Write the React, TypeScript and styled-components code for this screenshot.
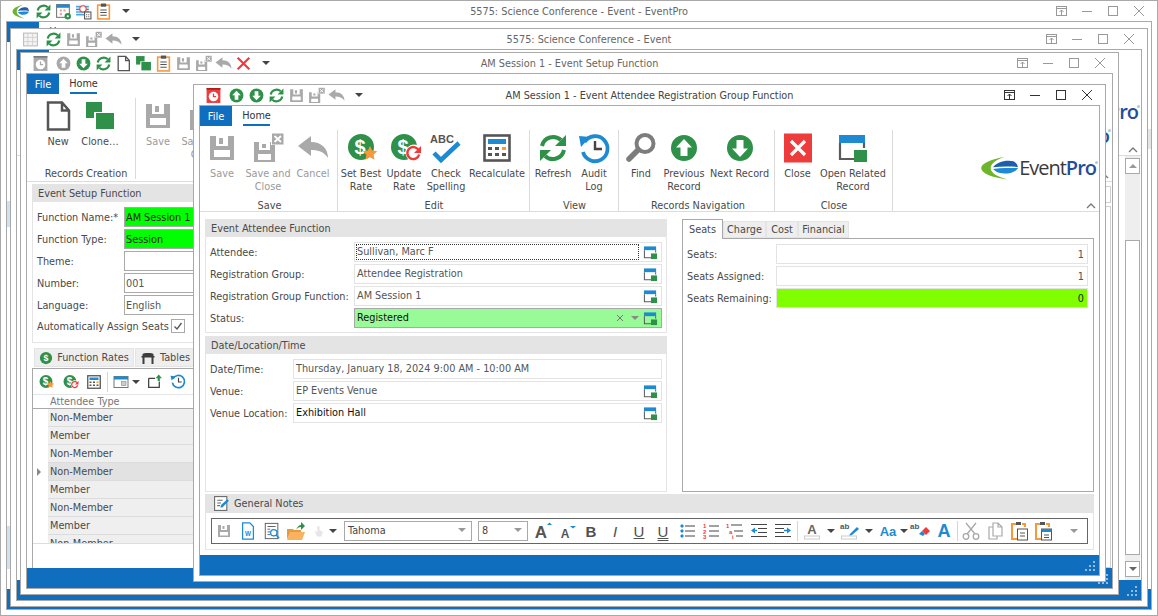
import React from "react";
import styled, { createGlobalStyle } from "styled-components";

const BLUE = "#106ebe";
const GREEN = "#2f9149";
const GRAY = "#a9a9a9";
const ORANGE = "#f7983a";
const RED = "#ee3b3b";
const SKY = "#1e8ad2";
const INK = "#505050";

const GlobalStyle = createGlobalStyle`
  html, body { margin: 0; padding: 0; background: #fff; }
  body { font-family: "DejaVu Sans Condensed", "DejaVu Sans", "Liberation Sans", sans-serif; font-size: 10.8px; color: #4a4a4a; }
  * { box-sizing: border-box; }
  svg { overflow: visible; }
`;

const Desktop = styled.div`
  position: relative;
  width: 1158px;
  height: 616px;
  overflow: hidden;
  background: #fff;
`;

const Win = styled.section<{ $x: number; $y: number; $w: number; $h: number }>`
  position: absolute;
  left: ${(p) => p.$x}px;
  top: ${(p) => p.$y}px;
  width: ${(p) => p.$w}px;
  height: ${(p) => p.$h}px;
  display: flex;
  flex-direction: column;
  padding: 0 5px 5px;
  background: #fff;
  border: 1px solid ${GRAY};
`;

const TitleBar = styled.header`
  height: 20px;
  flex: none;
  display: grid;
  grid-template-columns: 1fr auto 1fr;
  align-items: center;
`;

const Qat = styled.div`
  display: flex;
  align-items: center;
  padding-left: 4px;
`;

const QatCell = styled.span<{ $gap?: number }>`
  width: 20px;
  height: 20px;
  display: flex;
  align-items: center;
  justify-content: center;
  margin-right: ${(p) => p.$gap ?? 0}px;
`;

const Caret = styled.i<{ $color?: string; $gap?: number; $flip?: boolean }>`
  display: inline-block;
  width: 0;
  height: 0;
  margin-left: ${(p) => p.$gap ?? 0}px;
  border-left: 4px solid transparent;
  border-right: 4px solid transparent;
  border-top: ${(p) => (p.$flip ? "0" : `4px solid ${p.$color ?? "#444"}`)};
  border-bottom: ${(p) => (p.$flip ? `4px solid ${p.$color ?? "#444"}` : "0")};
`;

const Title = styled.h1<{ $active?: boolean; $shift?: number }>`
  margin: 0;
  margin-left: ${(p) => p.$shift ?? 0}px;
  font-size: 10.8px;
  font-weight: 400;
  white-space: nowrap;
  color: ${(p) => (p.$active ? "#444" : "#666")};
`;

const Controls = styled.div`
  display: flex;
  justify-content: flex-end;
`;

const ControlCell = styled.span`
  width: 26px;
  height: 20px;
  display: flex;
  align-items: center;
  justify-content: center;
`;

const Client = styled.div`
  flex: 1;
  min-height: 0;
  position: relative;
  display: flex;
  flex-direction: column;
  overflow: hidden;
  border: 1px solid ${GRAY};
`;

const TabRow = styled.nav`
  height: 20px;
  flex: none;
  display: flex;
`;

const FileTab = styled.span`
  width: 32px;
  display: flex;
  align-items: center;
  justify-content: center;
  background: ${BLUE};
  color: #fff;
  font-size: 11px;
`;

const HomeTab = styled.span`
  margin-left: 11px;
  width: 27px;
  display: flex;
  align-items: center;
  justify-content: center;
  color: #333;
  border-bottom: 2px solid ${BLUE};
`;

const RibbonBar = styled.div<{ $h?: number }>`
  position: relative;
  height: ${(p) => p.$h ?? 86}px;
  flex: none;
  display: flex;
  align-items: flex-start;
  border-bottom: 1px solid #dcdcdc;
`;

const Group = styled.div<{ $w: number; $pad?: number }>`
  width: ${(p) => p.$w}px;
  height: 81px;
  margin-top: 4px;
  padding-left: ${(p) => p.$pad ?? 1}px;
  display: flex;
  flex-direction: column;
  flex: none;
  border-right: 1px solid #dadada;
`;

const GroupButtons = styled.div`
  flex: 1;
  display: flex;
`;

const GroupCaption = styled.div`
  height: 13px;
  margin-bottom: -1px;
  line-height: 13px;
  text-align: center;
  color: #4a4a4a;
`;

const RibbonButton = styled.div<{ $w: number; $off?: boolean }>`
  width: ${(p) => p.$w}px;
  flex: none;
  display: flex;
  flex-direction: column;
  align-items: center;
  text-align: center;
  line-height: 13px;
  white-space: nowrap;
  color: ${(p) => (p.$off ? "#9a9a9a" : "#4a4a4a")};
`;

const RibbonIcon = styled.span`
  height: 37px;
  padding-bottom: 1px;
  display: flex;
  align-items: center;
  justify-content: center;
`;

const LogoBox = styled.div`
  position: absolute;
  right: 3px;
  top: 28px;
  height: 28px;
  display: flex;
  align-items: center;
  gap: 1px;
`;

const LogoWord = styled.span`
  position: relative;
  font-family: "Open Sans", "Liberation Sans", sans-serif;
  font-size: 20px;
  line-height: 28px;
  letter-spacing: -1px;
  color: #3a3a3a;
  &::after {
    content: "";
    position: absolute;
    right: -2px;
    top: 7px;
    width: 3px;
    height: 3px;
    border-radius: 50%;
    background: #a9c9e4;
  }
`;

const LogoPro = styled.b`
  color: #1d4f9c;
  font-weight: 600;
`;

const Collapse = styled.span`
  position: absolute;
  right: 2px;
  bottom: 0;
  display: flex;
`;

const Body = styled.div`
  flex: 1;
  min-height: 0;
  display: flex;
  flex-direction: column;
  gap: 2px;
  padding: 7px 5px 5px;
  overflow: hidden;
`;

const MainRow = styled.div`
  flex: 1;
  min-height: 0;
  display: flex;
  gap: 15px;
`;

const Column = styled.div<{ $w: number; $gap?: number }>`
  width: ${(p) => p.$w}px;
  flex: none;
  display: flex;
  flex-direction: column;
  gap: ${(p) => p.$gap ?? 3}px;
`;

const Panel = styled.div<{ $grow?: boolean }>`
  flex: ${(p) => (p.$grow ? 1 : "none")};
  border: 1px solid #e4e4e4;
  border-top: 0;
`;

const PanelHead = styled.div`
  height: 18px;
  display: flex;
  align-items: center;
  gap: 5px;
  padding-left: 5px;
  background: #e4e4e4;
  color: #4a4a4a;
`;

const Rows = styled.div`
  display: flex;
  flex-direction: column;
  gap: 2px;
  padding: 5px 4px 4px;
`;

const Row = styled.div<{ $label: number }>`
  display: grid;
  grid-template-columns: ${(p) => p.$label}px 1fr;
  align-items: center;
`;

const Label = styled.span`
  white-space: nowrap;
  color: #4a4a4a;
`;

const Field = styled.div<{ $bg?: string; $line?: string; $ink?: string; $right?: boolean }>`
  height: 20px;
  display: flex;
  align-items: center;
  gap: 4px;
  padding: 0 3px 0 1px;
  justify-content: ${(p) => (p.$right ? "flex-end" : "flex-start")};
  background: ${(p) => p.$bg ?? "#fff"};
  border: 1px solid ${(p) => p.$line ?? "#e3e3e3"};
  color: ${(p) => p.$ink ?? "#555"};
  white-space: nowrap;
  overflow: hidden;
`;

const FieldText = styled.span<{ $focus?: boolean }>`
  flex: 1;
  height: 16px;
  line-height: 14px;
  border: 1px ${(p) => (p.$focus ? "dotted #333" : "solid transparent")};
`;

const TabStrip = styled.div`
  height: 19px;
  flex: none;
  display: flex;
  align-items: flex-end;
  position: relative;
  z-index: 1;
`;

const PageTab = styled.span<{ $w: number; $active?: boolean; $h?: number }>`
  width: ${(p) => p.$w}px;
  height: ${(p) => p.$h ?? (p.$active ? 20 : 17)}px;
  margin-bottom: ${(p) => (p.$active ? -1 : 0)}px;
  display: flex;
  align-items: center;
  justify-content: center;
  gap: 4px;
  background: ${(p) => (p.$active ? "#fff" : "#eee")};
  border: 1px solid ${(p) => (p.$active ? GRAY : "#e4e4e4")};
  border-bottom: ${(p) => (p.$active ? "0" : "1px solid #e4e4e4")};
`;

const TabPane = styled.div`
  flex: 1;
  padding: 5px 5px 0 4px;
  display: flex;
  flex-direction: column;
  gap: 2px;
  border: 1px solid ${GRAY};
`;

const NotesPanel = styled.div`
  flex: none;
  border: 1px solid #e4e4e4;
  border-top: 0;
`;

const NotesHead = styled(PanelHead)`
  height: 19px;
  gap: 4px;
  padding-left: 7px;
`;

const Toolbar = styled.div`
  height: 26px;
  margin: 5px;
  display: flex;
  align-items: center;
  border: 1px solid #666;
`;

const Tool = styled.span<{ $w?: number; $ink?: string; $size?: number; $bold?: boolean; $italic?: boolean; $under?: string }>`
  width: ${(p) => p.$w ?? 24}px;
  height: 22px;
  flex: none;
  display: flex;
  align-items: center;
  justify-content: center;
  color: ${(p) => p.$ink ?? INK};
  font-family: "Liberation Sans", sans-serif;
  font-size: ${(p) => p.$size ?? 15}px;
  font-weight: ${(p) => (p.$bold ? 700 : 400)};
  font-style: ${(p) => (p.$italic ? "italic" : "normal")};
  text-decoration: ${(p) => (p.$under ? `underline ${p.$under}` : "none")};
`;

const ToolCaret = styled.span<{ $w?: number }>`
  width: ${(p) => p.$w ?? 14}px;
  flex: none;
  display: flex;
  justify-content: center;
`;

const Combo = styled.span<{ $w: number; $gap: number }>`
  width: ${(p) => p.$w}px;
  height: 20px;
  margin-left: ${(p) => p.$gap}px;
  flex: none;
  display: flex;
  align-items: center;
  justify-content: space-between;
  padding: 0 5px 2px 3px;
  color: #444;
  border: 1px solid ${GRAY};
`;

const ToolSep = styled.span<{ $left?: number; $right?: number }>`
  width: 1px;
  height: 20px;
  flex: none;
  margin: 0 ${(p) => p.$right ?? 2}px 0 ${(p) => p.$left ?? 2}px;
  background: #d4d4d4;
`;

const ToolEnd = styled.span`
  margin-left: auto;
  padding-right: 2px;
  width: 24px;
  display: flex;
  justify-content: center;
`;

const StatusBar = styled.footer`
  position: relative;
  height: 20px;
  flex: none;
  background: ${BLUE};
`;

const Grip = styled.svg`
  position: absolute;
  right: 2px;
  bottom: 2px;
`;

/* back windows */
const SetupBody = styled.div`
  flex: 1;
  min-height: 0;
  display: flex;
  gap: 12px;
  padding: 2px 0 0 5px;
  overflow: hidden;
`;

const SetupLeft = styled.div`
  width: 560px;
  flex: none;
  display: flex;
  flex-direction: column;
`;

const SetupRight = styled.div`
  flex: 1;
  display: flex;
  flex-direction: column;
  gap: 3px;
  padding: 2px 1px 0 0;
`;

const GhostBox = styled.div<{ $h?: number }>`
  flex: ${(p) => (p.$h ? "none" : 1)};
  height: ${(p) => (p.$h ? `${p.$h}px` : "auto")};
  border: 1px solid #cfcfcf;
`;

const CheckRow = styled(Row)`
  height: 18px;
`;

const Spacer = styled.span`
  height: 1px;
`;

const CheckBox = styled.span`
  width: 14px;
  height: 14px;
  display: flex;
  align-items: center;
  justify-content: center;
  border: 1px solid ${GRAY};
`;

const GridTabs = styled.div`
  height: 25px;
  flex: none;
  padding: 5px 0 0 2px;
  display: flex;
  gap: 1px;
`;

const DataGrid = styled.div`
  flex: 1;
  min-height: 0;
  display: flex;
  flex-direction: column;
  border-left: 1px solid ${GRAY};
  border-top: 1px solid ${GRAY};
`;

const GridTools = styled.div`
  height: 25px;
  flex: none;
  display: flex;
  align-items: center;
  padding-left: 1px;
`;

const GridHead = styled.div`
  height: 15px;
  flex: none;
  padding-left: 17px;
  line-height: 14px;
  color: #777;
  border-top: 1px solid #e4e4e4;
  border-bottom: 1px solid ${GRAY};
`;

const GridRows = styled.div`
  height: 135px;
  flex: none;
  overflow: hidden;
  border-bottom: 1px solid #ddd;
`;

const GridRow = styled.div<{ $current?: boolean }>`
  position: relative;
  height: 18px;
  margin-left: 15px;
  padding-left: 2px;
  line-height: 18px;
  background: ${(p) => (p.$current ? "#e2e2e2" : "#efefef")};
  border-bottom: 1px solid #dcdcdc;
`;

const RowPointer = styled.i`
  position: absolute;
  left: -11px;
  top: 5px;
  border-top: 4px solid transparent;
  border-bottom: 4px solid transparent;
  border-left: 4px solid #888;
`;

const ScrollBody = styled.div`
  flex: 1;
  min-height: 0;
  display: flex;
  justify-content: flex-end;
`;

const ScrollTrack = styled.div`
  width: 15px;
  margin-right: 1px;
  display: flex;
  flex-direction: column;
  padding: 2px 0 1px;
  background: #eee;
`;

const ScrollStep = styled.span`
  height: 16px;
  flex: none;
  display: flex;
  align-items: center;
  justify-content: center;
  background: #fff;
  border: 1px solid ${GRAY};
`;

const ScrollThumb = styled.span`
  height: 315px;
  margin: 66px 0 6px;
  flex: none;
  background: #fff;
  border: 1px solid ${GRAY};
`;

const EdgeMark = styled.span<{ $side: "left" | "right"; $top: number; $h: number; $tone: string }>`
  position: absolute;
  ${(p) => p.$side}: 0;
  top: ${(p) => p.$top}px;
  width: 3px;
  height: ${(p) => p.$h}px;
  background: ${(p) => p.$tone};
`;

const up = (
  <>
    <circle cx="16" cy="16" r="13" fill={GREEN} />
    <path d="M16 7l8 8.500h-4.500V24h-7v-8.500H8z" fill="#fff" />
  </>
);

const down = (
  <>
    <circle cx="16" cy="16" r="13" fill={GREEN} />
    <path d="M16 25l8-8.500h-4.500V8h-7v8.500H8z" fill="#fff" />
  </>
);

const dollar = (
  <>
    <circle cx="16" cy="15" r="13" fill={GREEN} />
    <text x="15" y="22" textAnchor="middle" fontFamily="Liberation Sans" fontWeight="700" fontSize="20" fill="#fff">$</text>
  </>
);

const floppy = (c: string) => (
  <path fillRule="evenodd" fill={c} d="M4 4h24v24H4zM10 4v10h12V4zM8 18v7h16v-7zM13 6h4v6h-4z" />
);

const big: Record<string, React.ReactNode> = {
  save: floppy(GRAY),
  saveClose: (
    <>
      <path fillRule="evenodd" fill={GRAY} d="M2 10h21v20H2zM7 10v8h11v-8zM6 22v6h13v-6zM10 12h4v4h-4z" />
      <rect x="19" y="1" width="12.500" height="12" fill="#fff" />
      <rect x="20" y="1.500" width="11.500" height="11" fill={GRAY} />
      <path d="M22.500 4l6.500 6M29 4l-6.500 6" stroke="#fff" strokeWidth="1.800" />
    </>
  ),
  undo: <path fill={GRAY} d="M1 14L14 4v6c10 0 17 6 17 16-4-6-9-8-17-8v6z" />,
  up,
  down,
  upGray: (
    <>
      <circle cx="16" cy="16" r="13" fill={GRAY} />
      <path d="M16 7l8 8.500h-4.500V24h-7v-8.500H8z" fill="#fff" />
    </>
  ),
  refresh: (
    <>
      <path d="M5 14A11.500 11.500 0 0 1 24 8" fill="none" stroke={GREEN} strokeWidth="4" />
      <path d="M29 3v11H18z" fill={GREEN} />
      <path d="M27 18A11.500 11.500 0 0 1 8 24" fill="none" stroke={GREEN} strokeWidth="4" />
      <path d="M3 29V18h11z" fill={GREEN} />
    </>
  ),
  bestRate: (
    <>
      {dollar}
      <path d="M25 14l2.200 4.500 5 .7-3.600 3.500.9 5-4.500-2.400-4.500 2.400.9-5-3.600-3.500 5-.7z" fill={ORANGE} />
    </>
  ),
  updateRate: (
    <>
      {dollar}
      <circle cx="26" cy="21" r="8.500" fill="#fff" />
      <path d="M31 19a6 6 0 1 0 .2 3.500" fill="none" stroke={RED} strokeWidth="2.400" />
      <path d="M33 14v7h-7z" fill={RED} />
    </>
  ),
  spell: (
    <>
      <text x="0" y="11" fontFamily="Liberation Sans" fontWeight="700" fontSize="11" fill="#555">ABC</text>
      <path d="M4 21l7 7L29 11" fill="none" stroke={SKY} strokeWidth="4.500" />
    </>
  ),
  calc: (
    <>
      <rect x="3.500" y="3.500" width="25" height="25" fill="#fff" stroke="#555" strokeWidth="2.600" />
      <rect x="7" y="7" width="18" height="5" fill={SKY} />
      <path d="M7 15h4v3H7zM14 15h4v3h-4zM7 21h4v3H7zM14 21h4v3h-4zM21 21h4v3h-4z" fill="#555" />
      <rect x="21" y="15" width="4" height="3" fill={ORANGE} />
    </>
  ),
  audit: (
    <>
      <path d="M6.500 10A12.500 12.500 0 1 1 5 20" fill="none" stroke={SKY} strokeWidth="3.800" />
      <path d="M1 4l11 1-9 10z" fill={SKY} />
      <path d="M17 9v8h7" fill="none" stroke="#444" strokeWidth="2.400" />
    </>
  ),
  find: (
    <>
      <circle cx="20" cy="11.500" r="8.500" fill="#fff" stroke="#7d7d7d" strokeWidth="4" />
      <path d="M13 18L4 27" stroke="#7d7d7d" strokeWidth="5.500" strokeLinecap="round" />
    </>
  ),
  close: (
    <>
      <rect x="2" y="1.500" width="28" height="29" fill={RED} />
      <path d="M9 9l14 14M23 9L9 23" stroke="#fff" strokeWidth="3.200" />
    </>
  ),
  related: (
    <>
      <rect x="2" y="3" width="26" height="8" fill={SKY} />
      <path d="M3 11v16h16M27 11v5" fill="none" stroke="#5b5b5b" strokeWidth="2.200" />
      <rect x="17" y="18" width="13" height="12" fill={GREEN} />
    </>
  ),
  newDoc: <path d="M6 2.500h14l7 8v19H6z M20 2.500v8h7" fill="none" stroke="#555" strokeWidth="2.500" />,
  clone: (
    <>
      <rect x="2" y="2" width="16" height="16" fill={GREEN} />
      <rect x="10" y="12" width="18" height="16" fill="#fff" />
      <rect x="12" y="13" width="18" height="16" fill={GREEN} />
    </>
  ),
  clockRed: (
    <>
      <rect x="3" y="2" width="26" height="28" fill={RED} />
      <rect x="3" y="2" width="26" height="3" fill="#a81c1c" />
      <circle cx="16" cy="18" r="9" fill="#fff" />
      <path d="M16 12v6h5" fill="none" stroke={RED} strokeWidth="2.400" />
    </>
  ),
  clockGray: (
    <>
      <rect x="3" y="2" width="26" height="28" fill={GRAY} />
      <rect x="3" y="2" width="26" height="3" fill="#777" />
      <circle cx="16" cy="18" r="9" fill="#fff" />
      <path d="M16 12v6h5" fill="none" stroke={GRAY} strokeWidth="2.400" />
    </>
  ),
  clipboard: (
    <>
      <rect x="5" y="4" width="22" height="26" fill="#fff" stroke={ORANGE} strokeWidth="3" />
      <rect x="11" y="1" width="10" height="6" fill="#555" />
      <path d="M10 13h12M10 18h12M10 23h12" stroke="#555" strokeWidth="2" />
    </>
  ),
  xRed: <path d="M5 5l22 22M27 5L5 27" stroke={RED} strokeWidth="4" />,
  grid: (
    <>
      <rect x="3" y="4" width="26" height="24" fill="#f4f4f4" stroke="#bbb" strokeWidth="2" />
      <path d="M11 4v24M20 4v24M3 12h26M3 20h26" stroke="#ccc" strokeWidth="1.500" />
    </>
  ),
  calGear: (
    <>
      <rect x="3" y="3" width="24" height="24" fill="#fff" stroke="#777" strokeWidth="2" />
      <rect x="3" y="3" width="24" height="6" fill={SKY} />
      <path d="M9 12h4v4H9zM16 12h4v4h-4zM9 19h4v4H9z" fill="#e8a0a0" />
      <circle cx="24" cy="25" r="6" fill={GREEN} />
      <circle cx="24" cy="25" r="2" fill="#fff" />
    </>
  ),
  schedule: (
    <>
      <rect x="2" y="3" width="24" height="22" fill="#dcebf7" />
      <path d="M2 7h24M2 12h24M2 17h24M2 22h24" stroke={SKY} strokeWidth="2" />
      <circle cx="15" cy="11" r="6" fill="#fff" stroke={RED} strokeWidth="2" />
      <rect x="18" y="17" width="12" height="13" fill="#fff" stroke="#555" strokeWidth="2" />
      <path d="M21 22h2M25 22h2M21 26h2M25 26h2" stroke="#555" strokeWidth="2" />
    </>
  ),
  swoosh: (
    <>
      <path d="M21 3C9 6 1 11 1 16c0 6 9 11 22 13-8-3-14-7-14-13 0-5 5-10 12-13z" fill="#6fb52c" />
      <path d="M11 15c3-5 9-8 15-7 3 0 5 2 6 7-6-1-14-1-21 0z" fill="#1d5fae" />
      <path d="M11 17c7-1 14-1 21-1-2 5-8 7-13 6-3 0-6-2-8-5z" fill="#1e8ad2" />
    </>
  ),
  window: (
    <>
      <rect x="2" y="5" width="28" height="22" fill="#fff" stroke="#777" strokeWidth="2" />
      <rect x="2" y="5" width="28" height="6" fill={SKY} />
      <rect x="17" y="15" width="9" height="8" fill="#ccc" stroke="#777" />
    </>
  ),
  folderUp: (
    <>
      <path d="M5 10h12M5 10v17h20V16" fill="none" stroke="#444" strokeWidth="2.400" />
      <path d="M24 3l6 7h-4v5h-4v-5h-4z" fill={GREEN} />
    </>
  ),
  history: (
    <>
      <path d="M5.500 11A11.500 11.500 0 1 1 4.500 18" fill="none" stroke={SKY} strokeWidth="3.200" />
      <path d="M1 5l9 1-7 8z" fill={SKY} />
      <path d="M16 9v8h6" fill="none" stroke="#444" strokeWidth="2.200" />
    </>
  ),
  tables: (
    <>
      <path d="M5 8c0-3 22-3 22 0v4H5z" fill="#3d3d3d" />
      <path d="M3 12h26v3H3zM5 15h4v13H5zM23 15h4v13h-4z" fill="#3d3d3d" />
    </>
  ),
  coin: (
    <>
      <circle cx="16" cy="16" r="14" fill={GREEN} />
      <text x="16" y="23" textAnchor="middle" fontFamily="Liberation Sans" fontWeight="700" fontSize="20" fill="#fff">$</text>
    </>
  ),
  notes: (
    <>
      <rect x="3" y="3" width="23" height="26" fill="#fff" stroke="#666" strokeWidth="2" />
      <path d="M8 10h10M8 15h7M8 20h5" stroke="#666" strokeWidth="2" />
      <path d="M14 24l1-5 12-11 3 3-12 12z" fill={SKY} />
    </>
  ),
};

const small: Record<string, React.ReactNode> = {
  word: (
    <>
      <path d="M4 1h8l4 4v14H4z" fill="#fff" stroke={SKY} strokeWidth="1.400" />
      <text x="10" y="15" textAnchor="middle" fontFamily="Liberation Sans" fontWeight="700" fontSize="7" fill={SKY}>W</text>
    </>
  ),
  preview: (
    <>
      <rect x="2.500" y="1.500" width="14" height="17" fill="#fff" stroke="#555" />
      <path d="M5 5h9M5 8h3M5 11h3M5 14h3" stroke="#555" />
      <circle cx="12" cy="12" r="3.500" fill="#fff" stroke={SKY} strokeWidth="1.400" />
      <path d="M14.500 14.500L18 18" stroke={SKY} strokeWidth="1.600" />
    </>
  ),
  open: (
    <>
      <path d="M1 8h6l1 1h7v2H5l-4 7z" fill="#e99a3f" />
      <path d="M4 11h15l-3 8H1z" fill="#f9b25e" />
      <path d="M10 9c1-3 3-5 5-5V1l4 4-4 4V6c-2 0-4 1-5 3z" fill={GREEN} />
    </>
  ),
  hand: <path d="M9 4v8l-2-2-1 1 3 6h5l2-5-1-2-3-.5V4z" fill="#e6e6e6" />,
  grow: (
    <>
      <text x="8" y="17" textAnchor="middle" fontFamily="Liberation Sans" fontWeight="700" fontSize="17" fill="#555">A</text>
      <path d="M14 4l2.500-2.500L19 4z" fill={SKY} />
    </>
  ),
  shrink: (
    <>
      <text x="8" y="17" textAnchor="middle" fontFamily="Liberation Sans" fontWeight="700" fontSize="12" fill="#555">A</text>
      <path d="M13 5h6l-3 2.500z" fill={SKY} />
    </>
  ),
  bullets: (
    <>
      <path d="M4 4h2v2H4zM4 9h2v2H4zM4 14h2v2H4z" fill={SKY} stroke={SKY} />
      <path d="M8 5h10M8 10h10M8 15h10" stroke="#444" />
    </>
  ),
  numbers: (
    <>
      <text x="2" y="7" fontFamily="Liberation Sans" fontWeight="700" fontSize="6" fill={RED}>1</text>
      <text x="2" y="12.500" fontFamily="Liberation Sans" fontWeight="700" fontSize="6" fill={RED}>2</text>
      <text x="2" y="18" fontFamily="Liberation Sans" fontWeight="700" fontSize="6" fill={RED}>3</text>
      <path d="M8 5h10M8 10h10M8 15h10" stroke="#444" />
    </>
  ),
  multi: (
    <>
      <text x="1" y="7" fontFamily="Liberation Sans" fontWeight="700" fontSize="6" fill={RED}>1</text>
      <text x="4" y="12.500" fontFamily="Liberation Sans" fontWeight="700" fontSize="6" fill={RED}>a</text>
      <text x="7" y="18" fontFamily="Liberation Sans" fontWeight="700" fontSize="6" fill={RED}>i</text>
      <path d="M6 4h11M9 10h9M11 15h7" stroke="#444" />
    </>
  ),
  outdent: (
    <>
      <path d="M2 3.500h16M9 7.500h9M9 11.500h9M2 15.500h16" stroke="#444" />
      <path d="M2 9.500l4-3v6z" fill={SKY} />
      <path d="M5 9.500h3" stroke={SKY} strokeWidth="1.500" />
    </>
  ),
  indent: (
    <>
      <path d="M2 3.500h16M2 7.500h9M2 11.500h9M2 15.500h16" stroke="#444" />
      <path d="M18 9.500l-4-3v6z" fill={SKY} />
      <path d="M11 9.500h4" stroke={SKY} strokeWidth="1.500" />
    </>
  ),
  fontColor: (
    <>
      <text x="10" y="13" textAnchor="middle" fontFamily="Liberation Sans" fontWeight="700" fontSize="13" fill="#666">A</text>
      <rect x="2.500" y="15" width="15" height="3" fill="#fff" stroke="#ccc" />
    </>
  ),
  highlight: (
    <>
      <text x="0" y="8" fontFamily="Liberation Sans" fontWeight="700" fontSize="8" fill="#555">ab</text>
      <path d="M10 13l7-7 2 2-7 6-3 1z" fill={SKY} />
      <rect x="1.500" y="15" width="15" height="3" fill="#fff" stroke="#ccc" />
    </>
  ),
  clear: (
    <>
      <text x="0" y="8" fontFamily="Liberation Sans" fontWeight="700" fontSize="8" fill="#555">ab</text>
      <path d="M12 10l4-4 4 4-4 4z" fill={RED} />
      <path d="M9 13l3-3 3 3-2 2z" fill={SKY} />
    </>
  ),
  cut: (
    <>
      <path d="M5 2l9 11M15 2L6 13" stroke={GRAY} strokeWidth="1.300" />
      <circle cx="5" cy="15.500" r="2.800" fill="none" stroke={GRAY} strokeWidth="1.300" />
      <circle cx="15" cy="15.500" r="2.800" fill="none" stroke={GRAY} strokeWidth="1.300" />
    </>
  ),
  copy: <path d="M8 2h5l4 4v9H8zM13 2v4h4M8 6H4v12h8v-3" fill="#fff" stroke={GRAY} strokeWidth="1.200" />,
  paste: (
    <>
      <path d="M8 3H3v15h5" fill="none" stroke={ORANGE} strokeWidth="2" />
      <path d="M13 3h3v3" fill="none" stroke={ORANGE} strokeWidth="2" />
      <rect x="7" y="1" width="5" height="3" fill="#555" />
      <rect x="8.500" y="8" width="10" height="11" fill="#fff" stroke="#555" />
      <path d="M11 12h5M11 15h5" stroke="#555" />
    </>
  ),
  pasteSpecial: (
    <>
      <path d="M8 3H3v15h5" fill="none" stroke={ORANGE} strokeWidth="2" />
      <path d="M13 3h3v3" fill="none" stroke={ORANGE} strokeWidth="2" />
      <rect x="7" y="1" width="5" height="3" fill="#555" />
      <rect x="8.500" y="8" width="10" height="11" fill="#fff" stroke="#555" />
      <rect x="8.500" y="8" width="10" height="3" fill={SKY} />
      <path d="M11 14h5M11 16.500h5" stroke="#555" />
    </>
  ),
};

const Icon = ({ name, size = 32 }: { name: string; size?: number }) => (
  <svg width={size} height={size} viewBox={name in big ? "0 0 32 32" : "0 0 20 20"}>
    {big[name] ?? small[name]}
  </svg>
);

const WinButtons = ({ tone }: { tone: string }) => (
  <Controls>
    <ControlCell>
      <svg width="14" height="14" viewBox="0 0 14 14" fill="none" stroke={tone}>
        <rect x="2.500" y="2.500" width="10" height="9" />
        <path d="M2.500 4.500h10M7.500 11V6M5.500 8l2-2 2 2" />
      </svg>
    </ControlCell>
    <ControlCell>
      <svg width="14" height="14" viewBox="0 0 14 14" stroke={tone}>
        <path d="M2 7.500h10" />
      </svg>
    </ControlCell>
    <ControlCell>
      <svg width="14" height="14" viewBox="0 0 14 14" fill="none" stroke={tone}>
        <rect x="2.500" y="2.500" width="9" height="9" />
      </svg>
    </ControlCell>
    <ControlCell>
      <svg width="14" height="14" viewBox="0 0 14 14" stroke={tone}>
        <path d="M2 2l10 10M12 2L2 12" />
      </svg>
    </ControlCell>
  </Controls>
);

const WinTitle = ({
  icons,
  text,
  active,
  shift,
}: {
  icons: string[];
  text: string;
  active?: boolean;
  shift?: number;
}) => (
  <TitleBar>
    <Qat>
      {icons.map((name, i) => (
        <QatCell key={name + i} $gap={i === 0 ? 3 : 0}>
          <Icon name={name} size={17} />
        </QatCell>
      ))}
      <Caret $gap={9} />
    </Qat>
    <Title $active={active} $shift={shift}>{text}</Title>
    <WinButtons tone={active ? "#333" : "#999"} />
  </TitleBar>
);

const Tabs = () => (
  <TabRow>
    <FileTab>File</FileTab>
    <HomeTab>Home</HomeTab>
  </TabRow>
);

const Logo = () => (
  <LogoBox>
    <svg width="38" height="28" viewBox="0 0 32 32" preserveAspectRatio="none">
      {big.swoosh}
    </svg>
    <LogoWord>
      Event<LogoPro>Pro</LogoPro>
    </LogoWord>
  </LogoBox>
);

const RibbonEnd = () => (
  <>
    <Logo />
    <Collapse>
      <svg width="12" height="10" viewBox="0 0 12 10" fill="none" stroke="#777" strokeWidth="1.300">
        <path d="M2 7l4-4 4 4" />
      </svg>
    </Collapse>
  </>
);

const Btn = ({ w, icon, off, children }: { w: number; icon: string; off?: boolean; children: React.ReactNode }) => (
  <RibbonButton $w={w} $off={off}>
    <RibbonIcon>
      <Icon name={icon} />
    </RibbonIcon>
    {children}
  </RibbonButton>
);

const RelatedIcon = () => <Icon name="related" size={15} />;

const FrontRibbon = () => (
  <RibbonBar>
    <Group $w={138} $pad={2}>
      <GroupButtons>
        <Btn w={40} icon="save" off>Save</Btn>
        <Btn w={52} icon="saveClose" off>Save and<br />Close</Btn>
        <Btn w={38} icon="undo" off>Cancel</Btn>
      </GroupButtons>
      <GroupCaption>Save</GroupCaption>
    </Group>
    <Group $w={192}>
      <GroupButtons>
        <Btn w={44} icon="bestRate">Set Best<br />Rate</Btn>
        <Btn w={42} icon="updateRate">Update<br />Rate</Btn>
        <Btn w={42} icon="spell">Check<br />Spelling</Btn>
        <Btn w={60} icon="calc">Recalculate</Btn>
      </GroupButtons>
      <GroupCaption>Edit</GroupCaption>
    </Group>
    <Group $w={89}>
      <GroupButtons>
        <Btn w={44} icon="refresh">Refresh</Btn>
        <Btn w={38} icon="audit">Audit<br />Log</Btn>
      </GroupButtons>
      <GroupCaption>View</GroupCaption>
    </Group>
    <Group $w={156} $pad={3}>
      <GroupButtons>
        <Btn w={38} icon="find">Find</Btn>
        <Btn w={48} icon="up">Previous<br />Record</Btn>
        <Btn w={63} icon="down">Next Record</Btn>
      </GroupButtons>
      <GroupCaption>Records Navigation</GroupCaption>
    </Group>
    <Group $w={118}>
      <GroupButtons>
        <Btn w={43} icon="close">Close</Btn>
        <Btn w={68} icon="related">Open Related<br />Record</Btn>
      </GroupButtons>
      <GroupCaption>Close</GroupCaption>
    </Group>
    <RibbonEnd />
  </RibbonBar>
);

const NotesToolbar = () => (
  <Toolbar>
    <Tool><Icon name="save" size={16} /></Tool>
    <Tool><Icon name="word" size={18} /></Tool>
    <Tool><Icon name="preview" size={18} /></Tool>
    <Tool><Icon name="open" size={20} /></Tool>
    <Tool $w={20}><Icon name="hand" size={16} /></Tool>
    <ToolCaret $w={10}><Caret /></ToolCaret>
    <Combo $w={128} $gap={6}>Tahoma<Caret $color="#999" /></Combo>
    <Combo $w={50} $gap={6}>8<Caret $color="#999" /></Combo>
    <Tool $w={3} />
    <Tool><Icon name="grow" size={20} /></Tool>
    <Tool><Icon name="shrink" size={20} /></Tool>
    <Tool $bold>B</Tool>
    <Tool $italic>I</Tool>
    <Tool $under="solid">U</Tool>
    <Tool $under="double">U</Tool>
    <Tool><Icon name="bullets" size={20} /></Tool>
    <Tool><Icon name="numbers" size={20} /></Tool>
    <Tool><Icon name="multi" size={20} /></Tool>
    <Tool><Icon name="outdent" size={20} /></Tool>
    <Tool><Icon name="indent" size={20} /></Tool>
    <ToolSep />
    <Tool><Icon name="fontColor" size={20} /></Tool>
    <ToolCaret><Caret /></ToolCaret>
    <Tool><Icon name="highlight" size={20} /></Tool>
    <ToolCaret><Caret /></ToolCaret>
    <Tool $ink={SKY} $size={13} $bold>Aa</Tool>
    <ToolCaret $w={8}><Caret /></ToolCaret>
    <Tool><Icon name="clear" size={20} /></Tool>
    <Tool $ink={SKY} $size={18} $bold>A</Tool>
    <ToolSep $left={1} $right={1} />
    <Tool><Icon name="cut" size={20} /></Tool>
    <Tool><Icon name="copy" size={20} /></Tool>
    <Tool><Icon name="paste" size={20} /></Tool>
    <Tool><Icon name="pasteSpecial" size={20} /></Tool>
    <ToolEnd><Caret $color="#999" /></ToolEnd>
  </Toolbar>
);

const Grips = () => (
  <Grip width="14" height="14" viewBox="0 0 14 14" fill="#9db9d4">
    <path d="M10 2h2v2h-2zM6 6h2v2H6zM10 6h2v2h-2zM2 10h2v2H2zM6 10h2v2H6zM10 10h2v2h-2z" />
  </Grip>
);

const attendees = ["Non-Member", "Member", "Non-Member", "Non-Member", "Member", "Non-Member", "Member", "Non-Member"];

const SetupWindow = () => (
  <Win $x={20} $y={52} $w={1099} $h={543}>
    <WinTitle
      icons={["clockGray", "upGray", "down", "refresh", "newDoc", "clone", "clipboard", "save", "saveClose", "undo", "xRed"]}
      text="AM Session 1 - Event Setup Function"
    />
    <Client>
      <Tabs />
      <RibbonBar $h={88}>
        <Group $w={109} $pad={10}>
          <GroupButtons>
            <Btn w={42} icon="newDoc">New</Btn>
            <Btn w={42} icon="clone">Clone…</Btn>
          </GroupButtons>
          <GroupCaption>Records Creation</GroupCaption>
        </Group>
        <Group $w={138} $pad={2}>
          <GroupButtons>
            <Btn w={40} icon="save" off>Save</Btn>
            <Btn w={52} icon="saveClose" off>Save and<br />Close</Btn>
          </GroupButtons>
          <GroupCaption>Save</GroupCaption>
        </Group>
        <RibbonEnd />
      </RibbonBar>
      <SetupBody>
        <SetupLeft>
          <Panel>
            <PanelHead>Event Setup Function</PanelHead>
            <Rows>
              <Row $label={87}><Label>Function Name:*</Label><Field $bg="#00ff00" $line={GRAY} $ink="#222">AM Session 1</Field></Row>
              <Row $label={87}><Label>Function Type:</Label><Field $bg="#00ff00" $line={GRAY} $ink="#222">Session</Field></Row>
              <Row $label={87}><Label>Theme:</Label><Field $line={GRAY} /></Row>
              <Row $label={87}><Label>Number:</Label><Field $line={GRAY}>001</Field></Row>
              <Row $label={87}><Label>Language:</Label><Field $line={GRAY}>English</Field></Row>
              <CheckRow $label={134}>
                <Label>Automatically Assign Seats</Label>
                <CheckBox>
                  <svg width="10" height="10" viewBox="0 0 10 10" fill="none" stroke="#555" strokeWidth="1.300">
                    <path d="M1.500 5.500l2.500 2.500 4.500-6" />
                  </svg>
                </CheckBox>
              </CheckRow>
              <Spacer />
            </Rows>
          </Panel>
          <GridTabs>
            <PageTab $w={100} $h={19}><Icon name="coin" size={14} />Function Rates</PageTab>
            <PageTab $w={60} $h={19}><Icon name="tables" size={16} />Tables</PageTab>
          </GridTabs>
          <DataGrid>
            <GridTools>
              <Tool><Icon name="bestRate" size={16} /></Tool>
              <Tool><Icon name="updateRate" size={16} /></Tool>
              <Tool><Icon name="calc" size={16} /></Tool>
              <ToolSep $left={1} $right={2} />
              <Tool $w={22}><Icon name="window" size={16} /></Tool>
              <Caret />
              <Tool $w={28}><Icon name="folderUp" size={17} /></Tool>
              <Tool $w={20}><Icon name="history" size={17} /></Tool>
            </GridTools>
            <GridHead>Attendee Type</GridHead>
            <GridRows>
              {attendees.map((name, i) => (
                <GridRow key={i} $current={i === 3}>
                  {i === 3 && <RowPointer />}
                  {name}
                </GridRow>
              ))}
            </GridRows>
          </DataGrid>
        </SetupLeft>
        <SetupRight>
          <GhostBox $h={17} />
          <GhostBox />
        </SetupRight>
      </SetupBody>
      <StatusBar>
        <Grips />
      </StatusBar>
    </Client>
  </Win>
);

const App = () => (
  <Desktop>
    <GlobalStyle />

    <Win $x={0} $y={0} $w={1158} $h={616}>
      <WinTitle
        icons={["swoosh", "refresh", "calGear", "schedule", "clipboard"]}
        text="5575: Science Conference - Event - EventPro"
      />
      <Client>
        <Tabs />
        <EdgeMark $side="left" $top={179} $h={26} $tone="#cfe2f3" />
        <EdgeMark $side="left" $top={504} $h={43} $tone="#cfe2f3" />
        <EdgeMark $side="right" $top={107} $h={20} $tone="#e5e5e5" />
        <ScrollBody />
        <StatusBar />
      </Client>
    </Win>

    <Win $x={10} $y={28} $w={1138} $h={579}>
      <WinTitle
        icons={["grid", "refresh", "save", "saveClose", "undo"]}
        text="5575: Science Conference - Event"
        shift={20}
      />
      <Client>
        <Tabs />
        <RibbonBar>
          <RibbonEnd />
        </RibbonBar>
        <ScrollBody>
          <ScrollTrack>
            <ScrollStep><Caret $color="#999" $flip /></ScrollStep>
            <ScrollThumb />
            <ScrollStep><Caret $color="#666" /></ScrollStep>
          </ScrollTrack>
        </ScrollBody>
        <StatusBar>
          <Grips />
        </StatusBar>
      </Client>
    </Win>

    <SetupWindow />

    <Win $x={193} $y={84} $w={913} $h={498}>
      <WinTitle
        icons={["clockRed", "up", "down", "refresh", "save", "saveClose", "undo"]}
        text="AM Session 1 - Event Attendee Registration Group Function"
        active
      />
      <Client>
        <Tabs />
        <FrontRibbon />
        <Body>
          <MainRow>
            <Column $w={462}>
              <Panel>
                <PanelHead>Event Attendee Function</PanelHead>
                <Rows>
                  <Row $label={144}>
                    <Label>Attendee:</Label>
                    <Field><FieldText $focus>Sullivan, Marc F</FieldText><RelatedIcon /></Field>
                  </Row>
                  <Row $label={144}>
                    <Label>Registration Group:</Label>
                    <Field><FieldText>Attendee Registration</FieldText><RelatedIcon /></Field>
                  </Row>
                  <Row $label={144}>
                    <Label>Registration Group Function:</Label>
                    <Field><FieldText>AM Session 1</FieldText><RelatedIcon /></Field>
                  </Row>
                  <Row $label={144}>
                    <Label>Status:</Label>
                    <Field $bg="#98fb98" $line={GRAY} $ink="#111">
                      <FieldText>Registered</FieldText>
                      <svg width="8" height="8" viewBox="0 0 8 8" stroke="#777"><path d="M1 1l6 6M7 1L1 7" /></svg>
                      <Caret $color="#888" $gap={3} />
                      <RelatedIcon />
                    </Field>
                  </Row>
                </Rows>
              </Panel>
              <Panel $grow>
                <PanelHead>Date/Location/Time</PanelHead>
                <Rows>
                  <Row $label={83}>
                    <Label>Date/Time:</Label>
                    <Field><FieldText>Thursday, January 18, 2024 9:00 AM - 10:00 AM</FieldText></Field>
                  </Row>
                  <Row $label={83}>
                    <Label>Venue:</Label>
                    <Field><FieldText>EP Events Venue</FieldText><RelatedIcon /></Field>
                  </Row>
                  <Row $label={83}>
                    <Label>Venue Location:</Label>
                    <Field $ink="#111"><FieldText>Exhibition Hall</FieldText><RelatedIcon /></Field>
                  </Row>
                </Rows>
              </Panel>
            </Column>
            <Column $w={412} $gap={0}>
              <TabStrip>
                <PageTab $w={41} $active>Seats</PageTab>
                <PageTab $w={43}>Charge</PageTab>
                <PageTab $w={32}>Cost</PageTab>
                <PageTab $w={51}>Financial</PageTab>
              </TabStrip>
              <TabPane>
                <Row $label={89}><Label>Seats:</Label><Field $right>1</Field></Row>
                <Row $label={89}><Label>Seats Assigned:</Label><Field $right>1</Field></Row>
                <Row $label={89}><Label>Seats Remaining:</Label><Field $right $bg="#7fff00" $ink="#222">0</Field></Row>
              </TabPane>
            </Column>
          </MainRow>
          <NotesPanel>
            <NotesHead><Icon name="notes" size={17} />General Notes</NotesHead>
            <NotesToolbar />
          </NotesPanel>
        </Body>
        <StatusBar>
          <Grips />
        </StatusBar>
      </Client>
    </Win>
  </Desktop>
);

export default App;
